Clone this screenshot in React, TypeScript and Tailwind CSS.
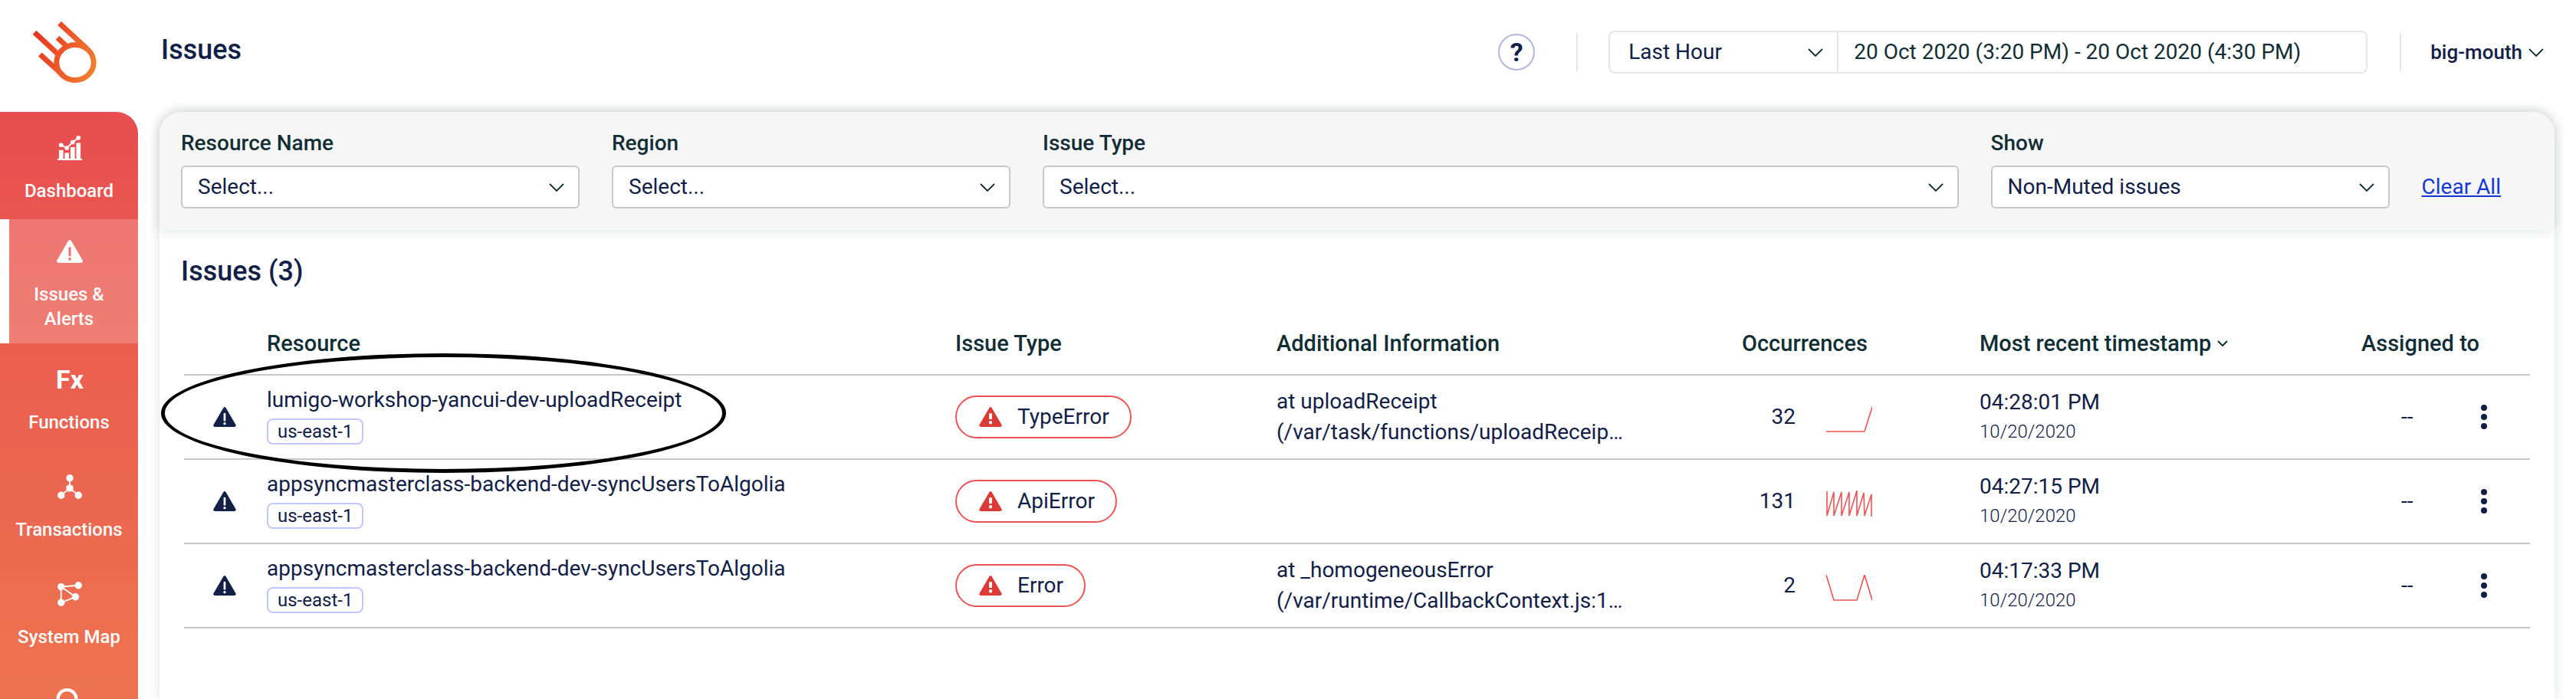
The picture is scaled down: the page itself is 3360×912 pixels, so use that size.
import React from "react";

type Issue = {
  resource: string;
  region: string;
  type: string;
  info: string[];
  count: number;
  points: string;
  time: string;
  date: string;
};

const issues: Issue[] = [
  {
    resource: "lumigo-workshop-yancui-dev-uploadReceipt",
    region: "us-east-1",
    type: "TypeError",
    info: ["at uploadReceipt", "(/var/task/functions/uploadReceip…"],
    count: 32,
    points: "0,33 50,33 60,1",
    time: "04:28:01 PM",
    date: "10/20/2020",
  },
  {
    resource: "appsyncmasterclass-backend-dev-syncUsersToAlgolia",
    region: "us-east-1",
    type: "ApiError",
    info: [],
    count: 131,
    points: "1,1 1,33 10,2 10,33 20,2 20,33 30,2 30,33 40,0 40,33 49,3 50,33 59,5 59,34",
    time: "04:27:15 PM",
    date: "10/20/2020",
  },
  {
    resource: "appsyncmasterclass-backend-dev-syncUsersToAlgolia",
    region: "us-east-1",
    type: "Error",
    info: ["at _homogeneousError", "(/var/runtime/CallbackContext.js:1…"],
    count: 2,
    points: "0,0 10,33 40,33 50,0 60,33",
    time: "04:17:33 PM",
    date: "10/20/2020",
  },
];

function Logo() {
  return (
    <svg viewBox="42 28 84 80" className="h-20 w-[84px]" fill="none" stroke="url(#comet)" strokeWidth="7">
      <defs>
        <linearGradient id="comet" gradientUnits="userSpaceOnUse" x1="44" y1="50" x2="124" y2="80">
          <stop offset="0" stopColor="#ea3323" />
          <stop offset="1" stopColor="#f07c30" />
        </linearGradient>
      </defs>
      <ellipse cx="98" cy="81.500" rx="24.200" ry="23.100" />
      <path d="M77.500 30.500 113.500 63.500M45 42.200 75 70M75 49.300 85.500 59M52.300 71 83 99" />
    </svg>
  );
}

function Chevron({ className }: { className: string }) {
  return (
    <svg viewBox="0 0 20 11" className={className} fill="none" stroke="currentColor" strokeWidth="1.800">
      <path d="M1 1 10 10 19 1" />
    </svg>
  );
}

function SortChevron() {
  return (
    <svg viewBox="0 0 14 8" className="h-2 w-[14px]" fill="none" stroke="currentColor" strokeWidth="2">
      <path d="M1 1 7 7 13 1" />
    </svg>
  );
}

function WarningIcon({ className, mark, bold }: { className: string; mark: string; bold?: boolean }) {
  return (
    <svg viewBox="0 0 34 30" className={className}>
      <path
        d="M15.2 1.1Q17-.9 18.8 1.1L33.6 26.6Q34.8 29.6 31.8 30H2.2Q-.8 29.6.4 26.6Z"
        fill="currentColor"
      />
      <path
        d={bold ? "M17 9.500V18.500" : "M17 10.500V20"}
        stroke={mark}
        strokeWidth={bold ? 4.400 : 3.200}
        strokeLinecap={bold ? "butt" : "round"}
      />
      {bold ? (
        <rect x="14.800" y="21" width="4.400" height="4.600" rx="1" fill={mark} />
      ) : (
        <circle cx="17" cy="25" r="1.900" fill={mark} />
      )}
    </svg>
  );
}

function DashboardIcon() {
  return (
    <svg viewBox="0 0 34 34" className="size-[34px]" fill="currentColor">
      <path d="M0 32h34v2H0zM2 20h6v12H2zM10 24h6v8h-6zM18 16h6v16h-6zM26 10h6v22h-6z" />
      <path d="M5 13 13 17 21 9 29 3" fill="none" stroke="currentColor" strokeWidth="2" />
      <circle cx="5" cy="13" r="3" />
      <circle cx="13" cy="17" r="3" />
      <circle cx="21" cy="9" r="3" />
      <circle cx="29" cy="3" r="3" />
    </svg>
  );
}

function TransactionsIcon() {
  return (
    <svg viewBox="0 0 34 34" className="size-[34px]" fill="currentColor">
      <path d="M17 5V19M5 29 17 19 29 29" fill="none" stroke="currentColor" strokeWidth="2" />
      <circle cx="17" cy="5" r="5" />
      <circle cx="17" cy="19" r="5" />
      <circle cx="5" cy="29" r="5" />
      <circle cx="29" cy="29" r="5" />
    </svg>
  );
}

function SystemMapIcon() {
  return (
    <svg viewBox="0 0 34 34" className="size-[34px]" fill="currentColor">
      <path d="M29 5 5 7V29L25 21 5 7" fill="none" stroke="currentColor" strokeWidth="2" />
      <circle cx="5" cy="7" r="5" />
      <circle cx="29" cy="5" r="5" />
      <circle cx="25" cy="21" r="5" />
      <circle cx="5" cy="29" r="5" />
    </svg>
  );
}

function SearchIcon() {
  return (
    <svg viewBox="0 0 34 34" className="size-[34px]" fill="none" stroke="currentColor" strokeWidth="4">
      <circle cx="14.500" cy="14" r="12" />
      <path d="M23 23 33 33" />
    </svg>
  );
}

function NavItem({ icon, label, active }: { icon: React.ReactNode; label: string; active?: boolean }) {
  return (
    <a
      href="#"
      className={
        active
          ? "flex h-[162px] shrink-0 flex-col items-center justify-center gap-[23px] border-l-[12px] border-white bg-white/20 bg-clip-padding pt-[9px] pr-3"
          : "flex h-[140px] shrink-0 flex-col items-center justify-center gap-[23px] pt-[9px]"
      }
    >
      <span className="flex size-[34px] shrink-0 items-center justify-center pl-[2px]">{icon}</span>
      <span className="w-[150px] text-center text-2xl leading-8 font-medium">{label}</span>
    </a>
  );
}

function Filter({ id, label, value }: { id: string; label: string; value: string }) {
  return (
    <div className="flex flex-col gap-[11px]">
      <label htmlFor={id} className="text-[28px] leading-9 font-medium text-[#122e35]">
        {label}
      </label>
      <div className="relative">
        <select
          id={id}
          className="block h-14 w-full appearance-none rounded-md border-2 border-[#c8c8c8] bg-white px-5 text-[28px] text-[#122047]"
        >
          <option>{value}</option>
        </select>
        <Chevron className="pointer-events-none absolute top-[23px] right-[20px] h-[11px] w-5 text-[#122e35]" />
      </div>
    </div>
  );
}

export default function App() {
  return (
    <div className="flex h-screen flex-col overflow-hidden bg-white font-[Roboto,sans-serif] text-[#122047]">
      <header className="flex h-[146px] shrink-0 items-start">
        <a href="#" aria-label="Home" className="w-[210px] shrink-0 pt-7 pl-[42px]">
          <Logo />
        </a>
        <h1 className="mt-[43px] text-[36px] leading-[44px] font-medium">Issues</h1>
        <div className="mt-10 ml-auto flex h-14 items-center pr-[42px]">
          <button
            type="button"
            className="flex size-12 items-center justify-center rounded-full border-2 border-[#b0b6e0] text-[34px] leading-none font-bold"
          >
            ?
          </button>
          <div className="ml-[54px] h-[50px] w-[2px] bg-[#e6e6e6]" />
          <div className="ml-10 flex h-14 w-[990px] rounded-lg border-2 border-[#e6e6e6]">
            <div className="relative w-[298px] border-r-2 border-[#e6e6e6]">
              <select
                aria-label="Time range"
                className="h-full w-full appearance-none bg-transparent pr-12 pl-6 text-[28px]"
              >
                <option>Last Hour</option>
              </select>
              <Chevron className="pointer-events-none absolute top-[21px] right-[18px] h-[11px] w-5 text-[#122e35]" />
            </div>
            <input
              aria-label="Date range"
              readOnly
              value="20 Oct 2020 (3:20 PM) - 20 Oct 2020 (4:30 PM)"
              className="min-w-0 flex-1 bg-transparent px-5 text-[28px] text-[#122e35] outline-none"
            />
          </div>
          <div className="ml-[42px] h-[50px] w-[2px] bg-[#e6e6e6]" />
          <button type="button" className="ml-[38px] flex items-center gap-2 text-[26px] leading-8 font-medium">
            big-mouth
            <Chevron className="h-[11px] w-5 text-[#122e35]" />
          </button>
        </div>
      </header>

      <div className="flex min-h-0 flex-1">
        <nav className="flex w-[180px] shrink-0 flex-col overflow-hidden rounded-tr-[28px] bg-linear-to-b from-[#e84e50] to-[#ed7350] text-white">
          <NavItem icon={<DashboardIcon />} label="Dashboard" />
          <NavItem
            icon={<WarningIcon className="h-[30px] w-[34px] shrink-0" mark="#ee7873" />}
            label="Issues & Alerts"
            active
          />
          <NavItem icon={<span className="text-[34px] leading-none font-bold">Fx</span>} label="Functions" />
          <NavItem icon={<TransactionsIcon />} label="Transactions" />
          <NavItem icon={<SystemMapIcon />} label="System Map" />
          <a href="#" aria-label="Search" className="flex shrink-0 justify-center pt-[30px]">
            <SearchIcon />
          </a>
        </nav>

        <main className="mx-7 min-w-0 flex-1 rounded-t-[28px] shadow-[0_0_16px_rgba(18,46,53,0.14)]">
          <section className="grid grid-cols-[520px_520px_1fr_520px_auto] items-end gap-x-[42px] rounded-t-[28px] bg-[#f6f6f6] px-7 pt-[23px] pr-[70px] pb-7 shadow-[0_0_16px_rgba(18,46,53,0.14)]">
            <Filter id="resource" label="Resource Name" value="Select..." />
            <Filter id="region" label="Region" value="Select..." />
            <Filter id="type" label="Issue Type" value="Select..." />
            <Filter id="show" label="Show" value="Non-Muted issues" />
            <a href="#" className="flex h-14 items-center text-[28px] text-[#1338d6] underline">
              Clear All
            </a>
          </section>

          <section className="px-7 pt-8">
            <h2 className="text-[36px] leading-[44px] font-medium">Issues (3)</h2>
            <div className="relative mt-[54px] mr-1 ml-1">
              <table className="w-full table-fixed border-separate border-spacing-0 text-left text-[28px]">
                <thead>
                  <tr className="text-[29px] text-[#122e35] [&>th]:border-b-2 [&>th]:border-[#c8c8c8] [&>th]:p-0 [&>th]:pb-[22px] [&>th]:leading-9 [&>th]:font-medium">
                    <th className="w-[108px]" aria-label="Status" />
                    <th>Resource</th>
                    <th className="w-[419px]">Issue Type</th>
                    <th className="w-[607px]">Additional Information</th>
                    <th className="w-[310px]">Occurrences</th>
                    <th className="w-[498px]">
                      <button type="button" className="flex items-center gap-2">
                        Most recent timestamp
                        <SortChevron />
                      </button>
                    </th>
                    <th className="w-[132px]">
                      <span className="whitespace-nowrap">Assigned to</span>
                    </th>
                    <th className="w-[88px]" aria-label="Actions" />
                  </tr>
                </thead>
                <tbody>
                  {issues.map((issue, i) => (
                    <tr key={i} className="h-[110px] [&>td]:border-b-2 [&>td]:border-[#c8c8c8] [&>td]:p-0">
                      <td>
                        <WarningIcon className="ml-[38px] h-[26px] w-[30px]" mark="#ffffff" />
                      </td>
                      <td>
                        <div className="flex flex-col items-start gap-[6px] pb-1">
                          <span className="leading-9 whitespace-nowrap">{issue.resource}</span>
                          <span className="flex h-[34px] items-center rounded-lg border-2 border-[#c3c5ff] px-3 text-2xl">
                            {issue.region}
                          </span>
                        </div>
                      </td>
                      <td>
                        <span className="inline-flex h-14 items-center gap-5 rounded-full border-2 border-[#ec5454] pr-[27px] pl-[29px] align-middle">
                          <WarningIcon className="h-[26px] w-[30px] text-[#dc3a36]" mark="#ffffff" bold />
                          {issue.type}
                        </span>
                      </td>
                      <td>
                        {issue.info.map((line) => (
                          <div key={line} className="leading-10 whitespace-nowrap">
                            {line}
                          </div>
                        ))}
                      </td>
                      <td>
                        <div className="flex items-center gap-10">
                          <span className="w-[70px] text-right">{issue.count}</span>
                          <svg
                            viewBox="0 0 60 34"
                            className="mt-[6px] h-[34px] w-[60px]"
                            fill="none"
                            stroke="#ec5454"
                            strokeWidth="1.600"
                          >
                            <polyline points={issue.points} />
                          </svg>
                        </div>
                      </td>
                      <td>
                        <div className="leading-[38px]">{issue.time}</div>
                        <div className="text-2xl leading-[38px] font-light">{issue.date}</div>
                      </td>
                      <td>
                        <div className="pl-[52px]">--</div>
                      </td>
                      <td>
                        <button type="button" aria-label="More" className="ml-6 flex flex-col gap-1 align-middle">
                          <span className="size-2 rounded-full bg-[#122047]" />
                          <span className="size-2 rounded-full bg-[#122047]" />
                          <span className="size-2 rounded-full bg-[#122047]" />
                        </button>
                      </td>
                    </tr>
                  ))}
                </tbody>
              </table>
              <div className="pointer-events-none absolute top-[31px] -left-[30px] h-[156px] w-[737px] rounded-[50%] border-[5px] border-black" />
            </div>
          </section>
        </main>
      </div>
    </div>
  );
}
